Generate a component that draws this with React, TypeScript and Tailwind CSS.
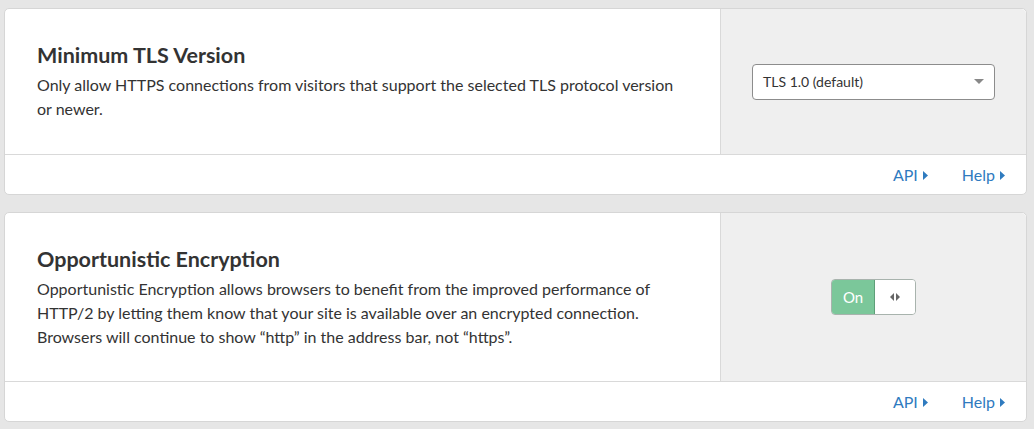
import type { ReactNode } from 'react'

function FooterLinks() {
  return (
    <div className="flex h-10 items-center justify-end gap-[34px] border-t border-[#d9d9d9] pr-[21px] text-[16px] text-[#2f7bbf]">
      <a className="flex items-center gap-[5px]" href="#">
        API
        <svg width="5" height="9" viewBox="0 0 5 9" className="mt-[1px]">
          <path d="M0 0 L5 4.5 L0 9 Z" fill="currentColor" />
        </svg>
      </a>
      <a className="flex items-center gap-[5px]" href="#">
        Help
        <svg width="5" height="9" viewBox="0 0 5 9" className="mt-[1px]">
          <path d="M0 0 L5 4.5 L0 9 Z" fill="currentColor" />
        </svg>
      </a>
    </div>
  )
}

interface SettingCardProps {
  title: string
  bodyHeight: string
  children: ReactNode
  control: ReactNode
}

function SettingCard({ title, bodyHeight, children, control }: SettingCardProps) {
  return (
    <div className="rounded-[5px] border border-[#d6d6d6] bg-white">
      <div className={`flex ${bodyHeight}`}>
        <div className="flex w-[715px] flex-col justify-center pr-[36px] pl-[32px]">
          <h3 className="mb-[5px] text-[21.5px] leading-[26px] font-bold text-[#333]">{title}</h3>
          <div className="text-[16px] leading-[24px] text-[#333]">{children}</div>
        </div>
        <div className="flex flex-1 items-center justify-center rounded-tr-[5px] border-l border-[#d9d9d9] bg-[#efefef]">
          {control}
        </div>
      </div>
      <FooterLinks />
    </div>
  )
}

export default function App() {
  return (
    <div
      className="min-h-[429px] bg-[#e6e6e6] px-[4px] pt-[8px]"
      style={{ fontFamily: 'Lato, "Open Sans", sans-serif' }}
    >
      <div className="flex w-[1023px] flex-col gap-[17px]">
        <SettingCard
          title="Minimum TLS Version"
          bodyHeight="h-[145px]"
          control={
            <div className="flex h-[36px] w-[243px] items-center justify-between rounded-[4px] border border-[#8c8c8c] bg-white pr-[10px] pl-[10px] text-[14px] text-[#333]">
              <span>TLS 1.0 (default)</span>
              <svg width="10" height="5" viewBox="0 0 10 5">
                <path d="M0 0 L10 0 L5 5 Z" fill="#888" />
              </svg>
            </div>
          }
        >
          Only allow HTTPS connections from visitors that support the selected TLS protocol version or newer.
        </SettingCard>
        <SettingCard
          title="Opportunistic Encryption"
          bodyHeight="h-[168px]"
          control={
            <div className="flex h-[36px] w-[85px] overflow-hidden rounded-[4px] border border-[#a8b3ad]">
              <div className="flex w-[43px] items-center justify-center border-r border-[#5e9f78] bg-[#7bc79a] text-[15px] text-white">
                On
              </div>
              <div className="flex flex-1 items-center justify-center bg-white">
                <svg width="10" height="8" viewBox="0 0 10 8">
                  <path d="M4 0 L4 8 L0 4 Z" fill="#666" />
                  <path d="M6 0 L6 8 L10 4 Z" fill="#666" />
                </svg>
              </div>
            </div>
          }
        >
          Opportunistic Encryption allows browsers to benefit from the improved performance of HTTP/2 by
          letting them know that your site is available over an encrypted connection. Browsers will
          continue to show “http” in the address bar, not “https”.
        </SettingCard>
      </div>
    </div>
  )
}
